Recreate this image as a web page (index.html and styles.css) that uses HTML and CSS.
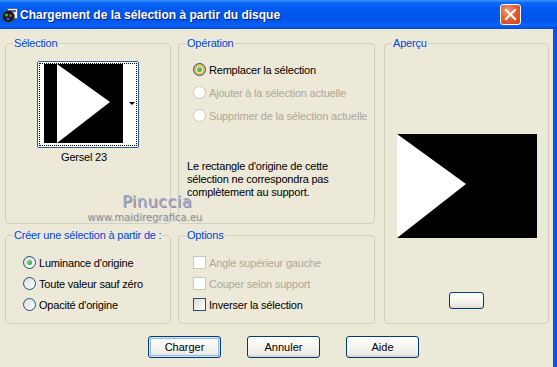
FILE: index.html
```html
<!DOCTYPE html>
<html lang="fr">
<head>
    <meta charset="UTF-8">
    <title>Chargement de la sélection à partir du disque</title>
    <link rel="stylesheet" href="styles.css">
</head>
<body>

    <div class="window">
        <div class="titlebar">
            <svg class="app-icon" width="16" height="16" viewBox="0 0 16 16">
                <rect x="5.5" y="1.5" width="10" height="10" fill="#f4f4f4" stroke="#5a6a8a"/>
                <rect x="7" y="3" width="7" height="2" fill="#3a6ad0"/>
                <circle cx="6.5" cy="9.5" r="6" fill="#1a1a1a" stroke="#555" stroke-width="0.8"/>
                <circle cx="4.5" cy="8" r="1.6" fill="#2fbf3a"/>
                <circle cx="8.5" cy="8.5" r="1.5" fill="#d8302a"/>
                <circle cx="6" cy="12" r="1.5" fill="#2a5ae8"/>
            </svg>
            <span class="title">Chargement de la sélection à partir du disque</span>
            <div class="close">
                <svg width="21" height="21" viewBox="0 0 21 21">
                    <path d="M6 6 L15 15 M15 6 L6 15" stroke="#fff" stroke-width="2.2" stroke-linecap="square"/>
                </svg>
            </div>
        </div>

        <div class="content">
            <div class="groups">
                <fieldset class="group g-selection">
                    <legend>Sélection</legend>
                    <div class="thumb">
                        <div class="thumb-focus">
                            <svg class="thumb-img" width="79" height="79" viewBox="0 0 79 79">
                                <rect width="79" height="79" fill="#000"/>
                                <polygon points="13,0 66,38 13,79" fill="#fff"/>
                            </svg>
                            <span class="thumb-arrow"></span>
                        </div>
                    </div>
                    <div class="thumb-name">Gersel 23</div>
                </fieldset>

                <fieldset class="group g-operation">
                    <legend>Opération</legend>
                    <div class="opt tall"><span class="radio checked hot"></span>Remplacer la sélection</div>
                    <div class="opt tall disabled"><span class="radio"></span>Ajouter à la sélection actuelle</div>
                    <div class="opt tall disabled"><span class="radio"></span>Supprimer de la sélection actuelle</div>
                    <p class="note">Le rectangle d'origine de cette<br>sélection ne correspondra pas<br>complètement au support.</p>
                </fieldset>

                <fieldset class="group g-preview">
                    <legend>Aperçu</legend>
                    <svg class="preview" width="140" height="104" viewBox="0 0 140 104">
                        <rect width="140" height="104" fill="#000"/>
                        <polygon points="0,0 69,50 0,104" fill="#fff"/>
                    </svg>
                    <div class="mini-btn"></div>
                </fieldset>

                <fieldset class="group g-create">
                    <legend>Créer une sélection à partir de :</legend>
                    <div class="opt"><span class="radio checked"></span>Luminance d'origine</div>
                    <div class="opt"><span class="radio"></span>Toute valeur sauf zéro</div>
                    <div class="opt"><span class="radio"></span>Opacité d'origine</div>
                </fieldset>

                <fieldset class="group g-options">
                    <legend>Options</legend>
                    <div class="opt disabled"><span class="check"></span>Angle supérieur gauche</div>
                    <div class="opt disabled"><span class="check"></span>Couper selon support</div>
                    <div class="opt"><span class="check"></span>Inverser la sélection</div>
                </fieldset>
            </div>

            <div class="buttons">
                <button type="button" class="btn default">Charger</button>
                <button type="button" class="btn">Annuler</button>
                <button type="button" class="btn">Aide</button>
            </div>
        </div>

        <div class="watermark">
            <div class="wm-name">Pinuccia</div>
            <div class="wm-url">www.maidiregrafica.eu</div>
        </div>
    </div>

</body>
</html>
```

FILE: styles.css
```css
* {
    box-sizing: border-box;
}

body {
    margin: 0;
    font-family: "Liberation Sans", Arial, sans-serif;
    font-size: 11px;
    letter-spacing: -0.2px;
    background-color: #ece9d8;
}

.window {
    position: relative;
    width: 557px;
    height: 367px;
    background: #0055ea;
    overflow: hidden;
}

/* title bar */

.titlebar {
    height: 29px;
    display: flex;
    align-items: center;
    padding: 0 36px 0 2px;
    background: linear-gradient(#3d95ff 0, #0a66f4 10%, #0058ee 35%, #0055ea 70%, #0a62f6 88%, #0048d8 100%);
}

.app-icon {
    flex: none;
    margin-top: 1px;
}

.title {
    flex: 1;
    margin-left: 2px;
    color: white;
    font-weight: bold;
    font-size: 12px;
    letter-spacing: 0;
    text-shadow: 1px 1px 0 #0a1f7a;
    white-space: nowrap;
}

.close {
    width: 21px;
    height: 21px;
    border: 1px solid white;
    border-radius: 3px;
    background: radial-gradient(circle at 35% 30%, #f39a7a 0, #e35f37 45%, #cc4319 100%);
    display: flex;
    align-items: center;
    justify-content: center;
}

.close svg {
    display: block;
    margin: -1px;
}

/* dialog body */

.content {
    width: 553px;
    height: 338px;
    background: #ece9d8;
}

.groups {
    display: grid;
    grid-template-columns: 166px 197px 167px;
    grid-template-rows: 187px 95px;
    column-gap: 7px;
    row-gap: 5px;
    padding: 8px 0 0 5px;
}

.group {
    margin: 0;
    padding: 0;
    min-width: 0;
    border: 1px solid #d0d0bf;
    border-radius: 4px;
}

.group legend {
    margin-left: 7px;
    padding: 0 1px;
    line-height: 13px;
    white-space: nowrap;
    color: #0046d5;
}

.g-selection {
    grid-column: 1;
    grid-row: 1;
}

.g-operation {
    grid-column: 2;
    grid-row: 1;
    padding-top: 8px;
}

.g-preview {
    grid-column: 3;
    grid-row: 1 / 3;
    margin-left: 2px;
}

.g-create {
    grid-column: 1;
    grid-row: 2;
    padding-top: 10px;
}

.g-options {
    grid-column: 2;
    grid-row: 2;
    padding-top: 10px;
}

/* thumbnail picker */

.thumb {
    width: 102px;
    height: 87px;
    margin: 11px auto 0;
    border: 1px solid #2d5c8c;
    border-radius: 2px;
    background: white;
    padding: 1px;
}

.thumb-focus {
    position: relative;
    height: 100%;
    border: 1px dotted #000;
    padding: 0 0 0 4px;
}

.thumb-img {
    display: block;
}

.thumb-arrow {
    position: absolute;
    right: 1px;
    top: 38px;
    border-left: 3px solid transparent;
    border-right: 3px solid transparent;
    border-top: 3px solid #000;
}

.thumb-name {
    margin-top: 3px;
    margin-right: 8px;
    text-align: center;
    line-height: 13px;
}

/* radios and checkboxes */

.opt {
    display: flex;
    align-items: center;
    height: 21px;
    margin-left: 14px;
    white-space: nowrap;
    color: #000;
}

.g-create .opt {
    margin-left: 17px;
}

.opt.tall {
    height: 23px;
}

.opt.disabled {
    color: #aca899;
}

.radio,
.check {
    position: relative;
    flex: none;
    width: 13px;
    height: 13px;
    margin-right: 3px;
    border: 1px solid #1c5180;
    background: linear-gradient(135deg, #dcdcd7, #fff);
}

.radio {
    border-radius: 50%;
}

.radio.hot {
    box-shadow: inset 0 0 0 2px #f8b636;
}

.radio.checked::after {
    content: "";
    position: absolute;
    left: 3px;
    top: 3px;
    width: 5px;
    height: 5px;
    border-radius: 50%;
    background: radial-gradient(circle at 35% 35%, #6fd86f, #21a121);
}

.disabled .radio,
.disabled .check {
    border-color: #cac8bb;
    background: #fff;
}

.note {
    margin: 33px 0 0 8px;
    line-height: 13px;
}

/* preview */

.preview {
    display: block;
    margin: 84px auto 0;
}

.mini-btn {
    width: 35px;
    height: 17px;
    margin: 54px auto 0;
    border: 1px solid #003c74;
    border-radius: 3px;
    background: linear-gradient(#fff, #f4f3ee 60%, #e2ded2);
}

/* buttons */

.buttons {
    display: flex;
    gap: 26px;
    margin-top: 12px;
    padding-left: 148px;
}

.btn {
    width: 73px;
    height: 22px;
    padding: 0;
    font-family: "Liberation Sans", Arial, sans-serif;
    font-size: 11px;
    color: #000;
    border: 1px solid #003c74;
    border-radius: 3px;
    background: linear-gradient(#fff, #f5f4ef 50%, #ecebe4 85%, #d6d0c5);
}

.btn.default {
    box-shadow: inset 0 0 0 1px #cee7ff, inset 0 0 0 2px #98b8ea;
}

/* watermark over the dialog */

.watermark {
    position: absolute;
    left: 80px;
    top: 193px;
    width: 130px;
    text-align: center;
    font-family: "DejaVu Sans", sans-serif;
    letter-spacing: 0;
}

.wm-name {
    font-size: 16px;
    line-height: 18px;
    letter-spacing: 0.5px;
    margin-left: 24px;
    color: #a9a9c7;
    text-shadow: 1px 1px 0 #8a8aa0;
}

.wm-url {
    font-size: 10px;
    line-height: 12px;
    margin-top: 1px;
    color: #8e8e8e;
    text-shadow: 1px 1px 0 #d8d8d8;
}
```
